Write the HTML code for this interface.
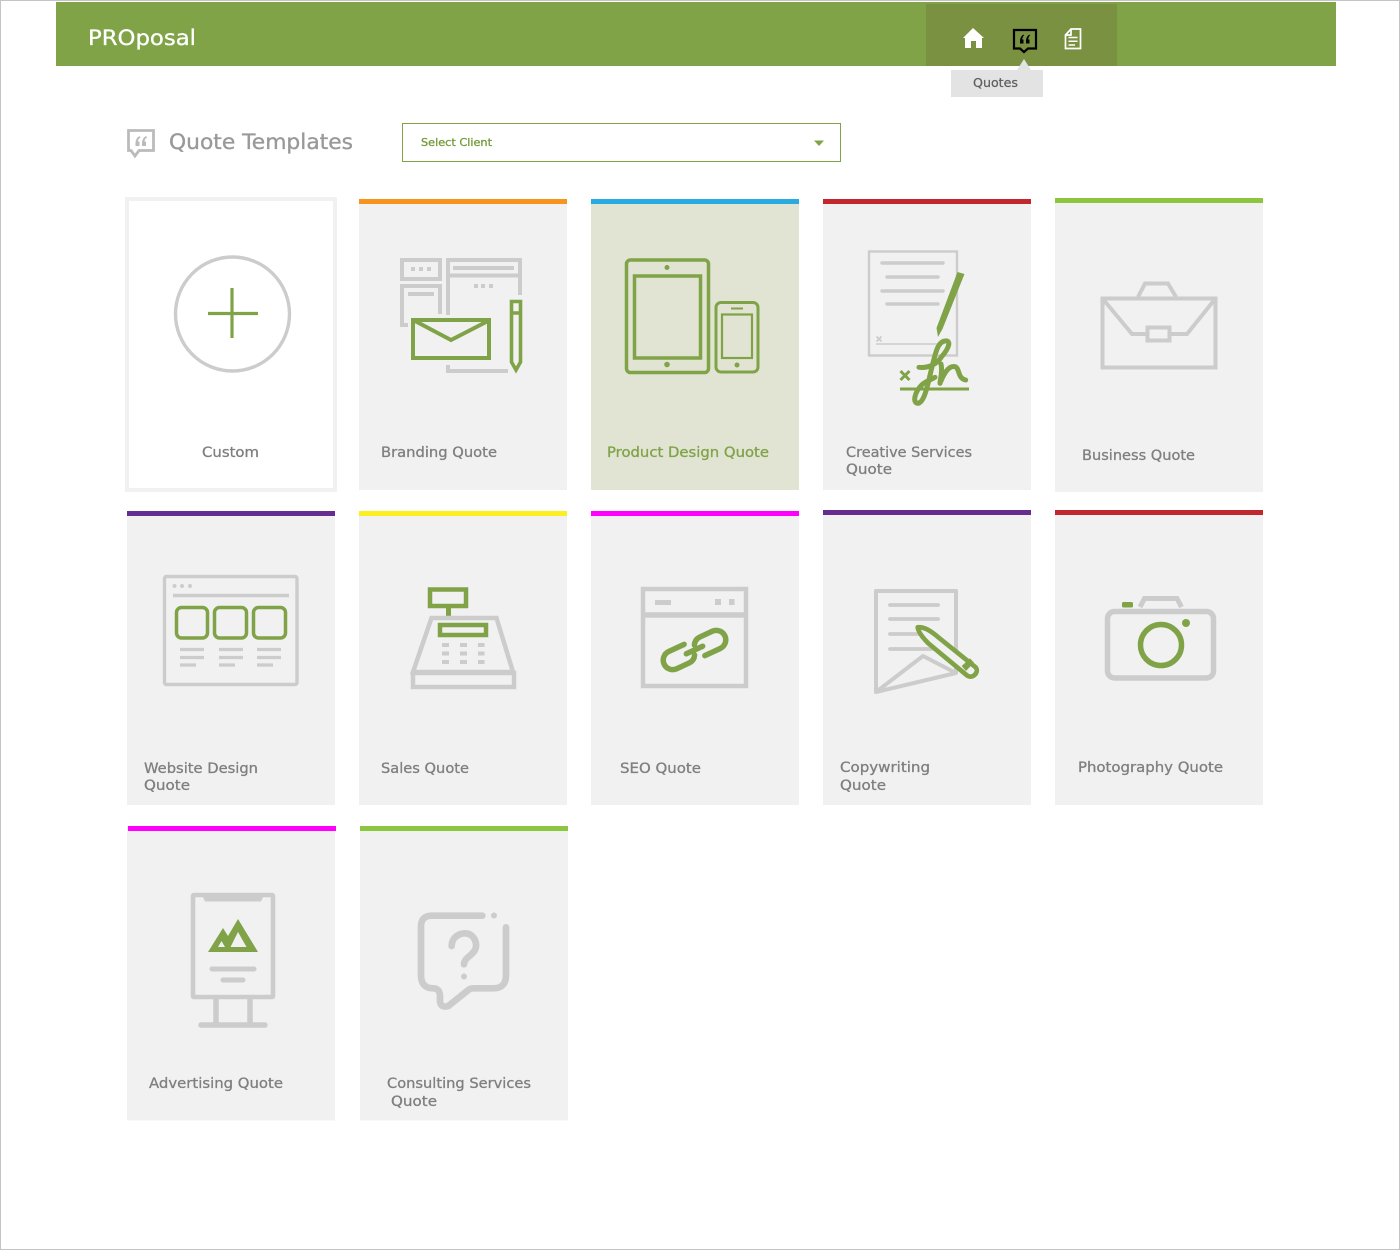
<!DOCTYPE html>
<html lang="en">
<head>
<meta charset="utf-8">
<title>PROposal - Quote Templates</title>
<style>
html,body{margin:0;padding:0;background:#fff;width:1400px;height:1250px;overflow:hidden}
svg{display:block;position:absolute;left:0;top:0}
text{font-family:"DejaVu Sans","Liberation Sans",sans-serif}
.l{font-size:14px;fill:#7f7f7f;stroke:#7f7f7f;stroke-width:.3}
.g{fill:none;stroke:#ccc;stroke-width:4}
.v{fill:none;stroke:#80a348;stroke-width:4}
.f{fill:#ccc}
</style>
</head>
<body>
<svg width="1400" height="1250" viewBox="0 0 1400 1250" xmlns="http://www.w3.org/2000/svg">
<rect x=".5" y=".5" width="1399" height="1249" fill="#fff" stroke="#c4c4c4"/>

<!-- header -->
<rect x="56" y="2" width="1280" height="64" fill="#80a348"/>
<rect x="926" y="4" width="191" height="62" fill="#7a9142"/>
<text x="88" y="45" font-size="21" fill="#fff" stroke="#fff" stroke-width=".3" textLength="108" lengthAdjust="spacingAndGlyphs">PROposal</text>
<path d="M973 28L963 38H965V48H971V41H976V48H982V38H984Z" fill="#fff"/>
<path d="M1014 30H1036V48.500H1028L1024 52L1020 48.500H1014Z" fill="none" stroke="#000" stroke-width="2.200"/>
<path d="M1023.500 34.500Q1020 36.500 1020 41V43.500H1023.500V39.500H1022.300Q1022.300 37 1024 35.500ZM1029.500 34.500Q1026 36.500 1026 41V43.500H1029.500V39.500H1028.300Q1028.300 37 1030 35.500Z" fill="#000"/>
<path d="M1071 29H1080.500V48.500H1065.500V35ZM1071 29V35H1065.500" fill="none" stroke="#fff" stroke-width="1.700"/>
<path d="M1068.500 37.500H1077.500M1068.500 41.300H1077.500M1068.500 45H1075" stroke="#fff" stroke-width="1.500"/>
<path d="M1024 59L1031 70H1017Z" fill="#e3e3e3"/>
<rect x="951" y="70" width="92" height="27" fill="#e3e3e3"/>
<text x="973" y="87" font-size="12.500" fill="#5f5f5f" stroke="#5f5f5f" stroke-width=".25" textLength="45" lengthAdjust="spacingAndGlyphs">Quotes</text>

<!-- title row -->
<path d="M128.500 130.500H153.500V150.500H139L135 156L131 150.500H128.500Z" fill="none" stroke="#bbb" stroke-width="2.800"/>
<path d="M139.500 136Q135.500 138.500 135.500 143V146H139.500V141.500H138Q138 139 140.500 137.500ZM146 136Q142 138.500 142 143V146H146V141.500H144.500Q144.500 139 147 137.500Z" fill="#bbb"/>
<text x="169" y="149" font-size="21.500" fill="#999" stroke="#999" stroke-width=".35" textLength="184" lengthAdjust="spacingAndGlyphs">Quote Templates</text>
<rect x="402.500" y="123.500" width="438" height="38" fill="#fff" stroke="#80a348"/>
<text x="421" y="146" font-size="11" fill="#74993a" stroke="#74993a" stroke-width=".3" textLength="71" lengthAdjust="spacingAndGlyphs">Select Client</text>
<path d="M814 140.500H824L819 146Z" fill="#80a348"/>

<!-- card backgrounds -->
<rect x="127" y="199" width="208" height="291" fill="#fff" stroke="#f1f1f1" stroke-width="4"/>
<rect x="359" y="199" width="208" height="291" fill="#f1f1f1"/><rect x="359" y="199" width="208" height="5" fill="#f7941d"/>
<rect x="591" y="199" width="208" height="291" fill="#e1e4d3"/><rect x="591" y="199" width="208" height="5" fill="#29abe2"/>
<rect x="823" y="199" width="208" height="291" fill="#f1f1f1"/><rect x="823" y="199" width="208" height="5" fill="#c1272d"/>
<rect x="1055" y="198" width="208" height="294" fill="#f1f1f1"/><rect x="1055" y="198" width="208" height="5" fill="#8cc63f"/>
<rect x="127" y="511" width="208" height="294" fill="#f1f1f1"/><rect x="127" y="511" width="208" height="5" fill="#662d91"/>
<rect x="359" y="511" width="208" height="294" fill="#f1f1f1"/><rect x="359" y="511" width="208" height="5" fill="#fcee21"/>
<rect x="591" y="511" width="208" height="294" fill="#f1f1f1"/><rect x="591" y="511" width="208" height="5" fill="#ff00ff"/>
<rect x="823" y="510" width="208" height="295" fill="#f1f1f1"/><rect x="823" y="510" width="208" height="5" fill="#662d91"/>
<rect x="1055" y="510" width="208" height="295" fill="#f1f1f1"/><rect x="1055" y="510" width="208" height="5" fill="#c1272d"/>
<rect x="127" y="826" width="208" height="294.500" fill="#f1f1f1"/><rect x="128" y="826" width="208" height="5" fill="#ff00ff"/>
<rect x="360" y="826" width="208" height="294.500" fill="#f1f1f1"/><rect x="360" y="826" width="208" height="5" fill="#8cc63f"/>

<!-- custom -->
<circle cx="232.500" cy="314" r="57" fill="none" stroke="#ccc" stroke-width="3.400"/>
<path d="M208 313.500H258M232 288V338" fill="none" stroke="#80a348" stroke-width="3.200"/>

<!-- branding -->
<g class="g">
<rect x="402" y="260" width="38" height="19"/>
<path d="M408 325H402V286H440V314"/>
<path d="M448 315V260H520V295M448 275.500H520"/>
<path d="M448 365V371H508"/>
</g>
<g class="f">
<rect x="411" y="267" width="4" height="4"/><rect x="419" y="267" width="4" height="4"/><rect x="427" y="267" width="4" height="4"/>
<rect x="408" y="292" width="26" height="4"/><rect x="453" y="266" width="61" height="4"/>
<rect x="474" y="284" width="4" height="4"/><rect x="481" y="284" width="4" height="4"/><rect x="489" y="284" width="4" height="4"/>
</g>
<g class="v">
<rect x="413" y="320" width="76" height="38" stroke-width="4"/>
<path d="M415 321L451 340L488 321"/>
<path d="M511.500 301.500H520.500V362L516 370L511.500 362ZM511.500 313H520.500" stroke-width="3.600"/>
</g>

<!-- product design -->
<g fill="none" stroke="#80a348" stroke-width="3.500">
<rect x="626.500" y="260" width="82" height="112.500" rx="4"/>
<rect x="634.500" y="276" width="66" height="82"/>
<rect x="716" y="302.500" width="42" height="69.500" rx="5" stroke-width="3"/>
<rect x="722" y="314.500" width="30" height="43.500" stroke-width="2.200"/>
<path d="M731 308.500H743" stroke-width="2"/>
</g>
<g fill="#80a348"><circle cx="667" cy="267.500" r="2.500"/><circle cx="667" cy="364.500" r="2.800"/><circle cx="737" cy="365" r="2.500"/></g>

<!-- creative -->
<rect x="869" y="251.500" width="88" height="104" fill="none" stroke="#ccc" stroke-width="2.400"/>
<path d="M882 263H943M887 277H938M882 291H943M887 304H938" stroke="#ccc" stroke-width="3.400" stroke-linecap="round"/>
<path d="M876 344H942" stroke="#ccc" stroke-width="1.500"/>
<path d="M876.500 336.500L881.500 341.500M881.500 336.500L876.500 341.500" stroke="#ccc" stroke-width="1.800"/>
<path d="M957.500 272L964.500 274L942.500 329L938 337L936.500 328Z" fill="#80a348"/>
<path d="M900.500 371L909.500 380M909.500 371L900.500 380" stroke="#80a348" stroke-width="3"/>
<path d="M900 389H969" stroke="#80a348" stroke-width="3"/>
<g transform="translate(850 240) scale(.3333)" fill="none" stroke="#80a348" stroke-width="15" stroke-linecap="round" stroke-linejoin="round">
<path d="M207 382C240 385 262 370 275 350C297 325 305 300 285 303C262 305 255 345 245 385C235 425 225 485 205 490C185 490 195 455 215 435C225 425 240 420 255 412"/>
<path d="M273 372C278 395 272 410 270 430C280 405 295 375 315 380C330 385 322 415 347 420"/>
</g>

<!-- business -->
<g class="g">
<rect x="1102.500" y="298.500" width="113" height="69"/>
<path d="M1138 297L1145 283.500H1168L1176 297"/>
<path d="M1102.500 298.500L1132 334H1147M1170 334H1187L1215.500 298.500"/>
<rect x="1147.500" y="327.500" width="22" height="13"/>
</g>

<!-- website -->
<rect x="164.500" y="576.500" width="132.500" height="108" rx="2" fill="none" stroke="#ccc" stroke-width="3.400"/>
<g class="f"><circle cx="174.500" cy="586" r="2"/><circle cx="182" cy="586" r="2"/><circle cx="190" cy="586" r="2"/></g>
<path d="M173 595.500H289" stroke="#ccc" stroke-width="3.400"/>
<g fill="none" stroke="#80a348" stroke-width="3.500">
<rect x="176.500" y="607.500" width="31" height="30.500" rx="5"/>
<rect x="214.500" y="607.500" width="32" height="30.500" rx="5"/>
<rect x="253.500" y="607.500" width="32" height="30.500" rx="5"/>
</g>
<path d="M180 649.500H204M180 657.500H204M180 665H196M219 649.500H243M219 657.500H243M219 665H235M257 649.500H281M257 657.500H281M257 665H273" stroke="#ccc" stroke-width="3.200"/>

<!-- sales -->
<rect x="430" y="589.500" width="36" height="16.500" fill="none" stroke="#80a348" stroke-width="4.500"/>
<rect x="446" y="608" width="5" height="9" fill="#80a348"/>
<path d="M431.500 618H496.500L513 672H413Z" class="g" style="stroke-width:4.500"/>
<rect x="413" y="673" width="101" height="14" class="g" style="stroke-width:4.500"/>
<rect x="440" y="625" width="46" height="10" fill="none" stroke="#80a348" stroke-width="4.500"/>
<g class="f">
<rect x="442" y="643" width="7" height="4"/><rect x="460" y="643" width="7" height="4"/><rect x="478" y="643" width="6.500" height="4"/>
<rect x="442" y="651.500" width="7" height="4"/><rect x="460" y="651.500" width="7" height="4"/><rect x="478" y="651.500" width="6.500" height="4"/>
<rect x="442" y="660" width="7" height="4"/><rect x="460" y="660" width="7" height="4"/><rect x="478" y="660" width="6.500" height="4"/>
</g>

<!-- seo -->
<rect x="643" y="589" width="103" height="97" fill="none" stroke="#ccc" stroke-width="4.500"/>
<path d="M643 615H746" stroke="#ccc" stroke-width="5.500"/>
<g class="f"><rect x="655" y="600" width="16" height="5"/><rect x="715" y="599" width="6" height="6"/><rect x="729" y="599" width="5.500" height="6"/></g>
<g transform="translate(694.500 650) rotate(-25)" fill="none" stroke="#80a348" stroke-width="5.500" stroke-linecap="round">
<path d="M-7 -9.500H-24a9.500 9.500 0 0 0 0 19H-10a9.500 9.500 0 0 0 8 -5"/>
<path d="M7 9.500H24a9.500 9.500 0 0 0 0 -19H10a9.500 9.500 0 0 0 -8 5"/>
<path d="M-9 0H9"/>
</g>

<!-- copywriting -->
<path d="M876 692V591H956V673L876 692L923 656L956 673" fill="none" stroke="#ccc" stroke-width="4" stroke-linejoin="round"/>
<path d="M890 605H938M890 619H938M890 634H925M890 649H932" stroke="#ccc" stroke-width="3.800" stroke-linecap="round"/>
<g transform="translate(860 580) scale(.3333)">
<path d="M173 142C195 140 215 155 235 172L347 262C358 275 340 298 322 287L205 190C185 170 175 155 173 142Z" fill="#f1f1f1" stroke="#80a348" stroke-width="14" stroke-linejoin="round"/>
<path d="M305 258L330 235L342 248L318 273Z" fill="#80a348"/>
</g>

<!-- photography -->
<rect x="1107.500" y="611.500" width="106" height="66.500" rx="7" fill="none" stroke="#ccc" stroke-width="5.500"/>
<path d="M1140 607L1144.500 598.500H1177L1181.500 607" class="g" style="stroke-width:5"/>
<rect x="1122" y="602" width="11" height="5.500" rx="1.500" fill="#80a348"/>
<circle cx="1161" cy="645" r="20.500" fill="none" stroke="#80a348" stroke-width="5.500"/>
<circle cx="1186" cy="623" r="4" fill="#80a348"/>

<!-- advertising -->
<rect x="193" y="895" width="80" height="102" rx="1" fill="none" stroke="#ccc" stroke-width="4.600"/>
<path d="M202 895H264L261 901.500H205Z" fill="#ccc"/>
<path d="M238 919L258 952H208L223 928L228 936ZM238 932L230.500 947H246.500ZM221.500 941L218 947H225Z" fill="#80a348" fill-rule="evenodd"/>
<path d="M212 969H254M223 980H243" stroke="#ccc" stroke-width="5" stroke-linecap="round"/>
<path d="M216 999V1024M250 999V1024" stroke="#ccc" stroke-width="5.500"/>
<path d="M201 1025H265" stroke="#ccc" stroke-width="5.500" stroke-linecap="round"/>

<!-- consulting -->
<g transform="translate(405 900) scale(.3333)" fill="none" stroke="#ccc" stroke-width="20" stroke-linecap="round" stroke-linejoin="round">
<path d="M232 47H80Q48 47 48 80V225Q48 265 85 265Q105 265 105 290V305Q108 325 130 318L190 270Q195 265 210 265H265Q303 265 303 225V82"/>
<path d="M140 138C140 110 165 100 180 100C205 100 215 125 213 140C210 165 178 170 177 193"/>
</g>
<g class="f"><circle cx="494" cy="915.500" r="3"/><circle cx="464" cy="976.500" r="3"/></g>

<!-- labels -->
<text class="l" x="202" y="457" textLength="57" lengthAdjust="spacingAndGlyphs">Custom</text>
<text class="l" x="381" y="457" textLength="116" lengthAdjust="spacingAndGlyphs">Branding Quote</text>
<text class="l" x="607" y="457" textLength="162" lengthAdjust="spacingAndGlyphs" style="fill:#80a348;stroke:#80a348">Product Design Quote</text>
<text class="l" x="846" y="457" textLength="126" lengthAdjust="spacingAndGlyphs">Creative Services</text>
<text class="l" x="846" y="474" textLength="46" lengthAdjust="spacingAndGlyphs">Quote</text>
<text class="l" x="1082" y="460" textLength="113" lengthAdjust="spacingAndGlyphs">Business Quote</text>
<text class="l" x="144" y="773" textLength="114" lengthAdjust="spacingAndGlyphs">Website Design</text>
<text class="l" x="144" y="790" textLength="46" lengthAdjust="spacingAndGlyphs">Quote</text>
<text class="l" x="381" y="773" textLength="88" lengthAdjust="spacingAndGlyphs">Sales Quote</text>
<text class="l" x="620" y="773" textLength="81" lengthAdjust="spacingAndGlyphs">SEO Quote</text>
<text class="l" x="840" y="772" textLength="90" lengthAdjust="spacingAndGlyphs">Copywriting</text>
<text class="l" x="840" y="790" textLength="46" lengthAdjust="spacingAndGlyphs">Quote</text>
<text class="l" x="1078" y="772" textLength="145" lengthAdjust="spacingAndGlyphs">Photography Quote</text>
<text class="l" x="149" y="1088" textLength="134" lengthAdjust="spacingAndGlyphs">Advertising Quote</text>
<text class="l" x="387" y="1088" textLength="144" lengthAdjust="spacingAndGlyphs">Consulting Services</text>
<text class="l" x="391" y="1106" textLength="46" lengthAdjust="spacingAndGlyphs">Quote</text>
</svg>
</body>
</html>
